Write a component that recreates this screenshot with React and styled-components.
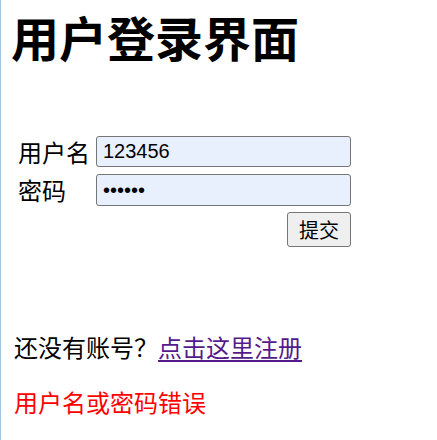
import styled, { createGlobalStyle } from 'styled-components';

const GlobalStyle = createGlobalStyle`
  html, body {
    margin: 0;
    padding: 0;
    background: #ffffff;
  }
  body {
    font-family: "Liberation Sans", "Noto Sans CJK SC", sans-serif;
    color: #000000;
  }
`;

const Page = styled.div`
  min-height: 440px;
  border-left: 1px solid #a3c6de;
  padding-left: 12px;
  box-sizing: border-box;
  overflow: hidden;
`;

const Title = styled.h1`
  margin: 8px 0 0 -2px;
  font-size: 48px;
  line-height: 56px;
  font-weight: bold;
  font-family: "Noto Sans CJK SC", sans-serif;
`;

const LoginForm = styled.form`
  margin-top: 72px;
  display: grid;
  grid-template-columns: 83px 255px;
  row-gap: 7px;
  align-items: center;
`;

const Label = styled.label`
  padding-left: 5px;
  font-size: 24px;
  line-height: 30px;
  font-family: "Noto Sans CJK SC", sans-serif;
`;

const Input = styled.input`
  box-sizing: border-box;
  width: 255px;
  height: ${({ $h }) => $h}px;
  margin: 0;
  padding: 0 6px;
  border: 1px solid #767676;
  border-radius: 3px;
  background: #e8f0fe;
  font-size: 20px;
  font-family: "Liberation Sans", "Noto Sans CJK SC", sans-serif;
  color: #000000;
  outline: none;
`;

const SubmitButton = styled.button`
  grid-column: 2;
  justify-self: end;
  margin-top: -1px;
  width: 64px;
  height: 35px;
  padding: 0;
  border: 1px solid #767676;
  border-radius: 3px;
  background: #efefef;
  font-size: 20px;
  font-family: "Noto Sans CJK SC", sans-serif;
  color: #000000;
`;

const Line = styled.p`
  margin: ${({ $top }) => $top}px 0 0 1px;
  font-size: 24px;
  line-height: 30px;
  font-family: "Noto Sans CJK SC", sans-serif;
  color: ${({ $error }) => ($error ? '#ff0000' : '#000000')};
`;

const RegisterLink = styled.a`
  color: #551a8b;
  text-decoration: underline;
  text-underline-offset: 3px;
`;

const App = () => {
  return (
    <>
      <GlobalStyle />
      <Page>
        <Title>用户登录界面</Title>
        <LoginForm onSubmit={(e) => e.preventDefault()}>
          <Label htmlFor="username">用户名</Label>
          <Input id="username" type="text" defaultValue="123456" $h={31} />
          <Label htmlFor="password">密码</Label>
          <Input id="password" type="password" defaultValue="123456" $h={32} />
          <SubmitButton type="submit">提交</SubmitButton>
        </LoginForm>
        <Line $top={85}>
          还没有账号？<RegisterLink href="#register">点击这里注册</RegisterLink>
        </Line>
        <Line $top={25} $error>
          用户名或密码错误
        </Line>
      </Page>
    </>
  );
};

export default App;
